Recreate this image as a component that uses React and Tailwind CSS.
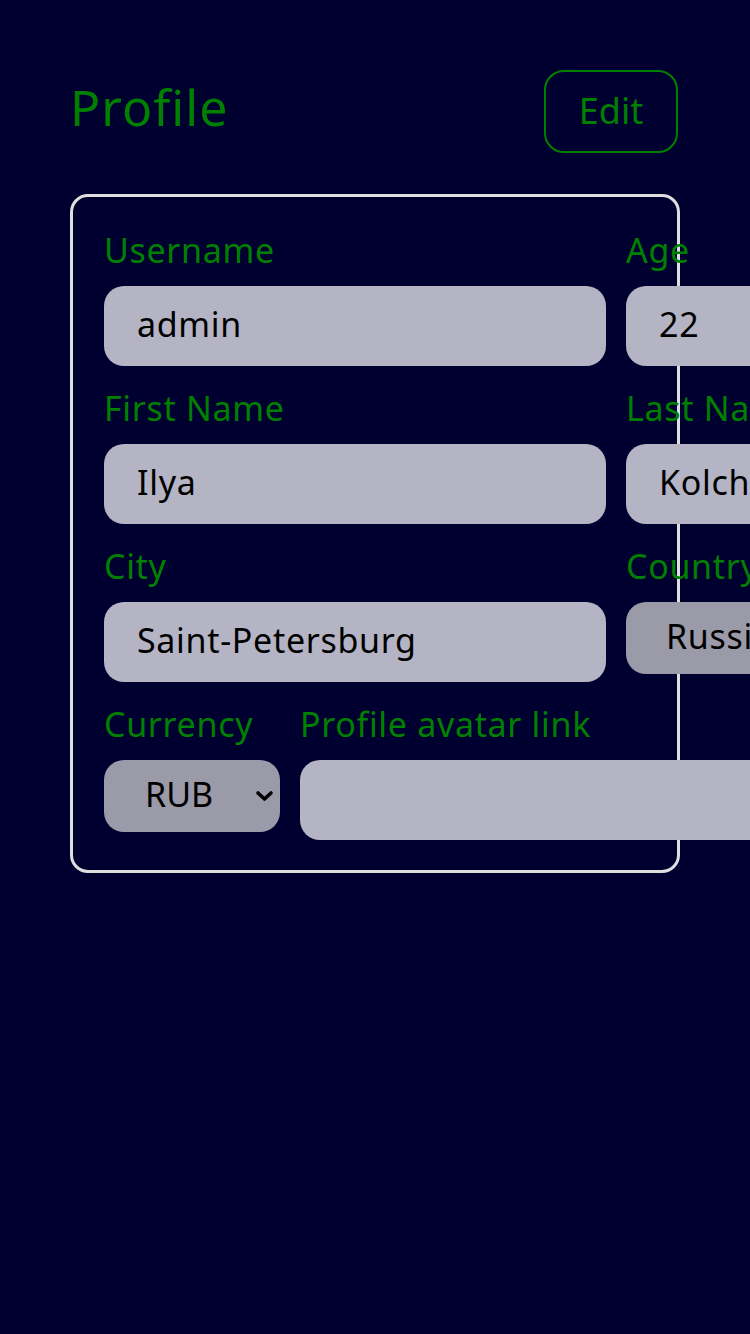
import React from "react";

const font = { fontFamily: '"Noto Sans", "Open Sans", sans-serif' };

function Label({ children }) {
  return (
    <label className="block h-8 leading-9 text-[34px] tracking-[0.02em] text-[#008000] whitespace-nowrap mb-[22px]">
      {children}
    </label>
  );
}

function Field({ label, value, width, select }) {
  return (
    <div className="flex flex-col shrink-0" style={{ width }}>
      <Label>{label}</Label>
      {select ? (
        <div className="h-[72px] rounded-[20px] bg-[#9b9aa9] flex items-center pl-10 pb-1 text-[34px] tracking-[0.02em] text-black overflow-hidden whitespace-nowrap">
          {value}
        </div>
      ) : (
        <div className="h-20 rounded-[20px] bg-[#b4b4c4] flex items-center pl-[33px] pb-1 text-[34px] tracking-[0.02em] text-black whitespace-nowrap overflow-hidden">
          {value}
        </div>
      )}
    </div>
  );
}

export default function App() {
  return (
    <div className="min-h-screen w-[750px] overflow-hidden bg-[#000030]" style={font}>
      <div className="pl-[70px] pt-[70px]">
        <div className="w-[608px] flex items-start justify-between">
          <h1 className="mt-[12px] text-[50px] leading-none tracking-[0.02em] text-[#008000]">Profile</h1>
          <button className="w-[134px] h-[83px] rounded-[20px] border-2 border-[#008000] text-[36px] text-[#008000] flex items-center justify-center pb-[2px]">
            Edit
          </button>
        </div>
        <div className="mt-[41px] w-[610px] border-[3px] border-[#dedede] rounded-[18px] pt-[35px] pb-[30px] px-[31px]">
          <div className="flex flex-col gap-6 w-[900px]">
            <div className="flex gap-5">
              <Field label="Username" value="admin" width={502} />
              <Field label="Age" value="22" width={300} />
            </div>
            <div className="flex gap-5">
              <Field label="First Name" value="Ilya" width={502} />
              <Field label="Last Name" value="Kolchin" width={300} />
            </div>
            <div className="flex gap-5 items-start">
              <Field label="City" value="Saint-Petersburg" width={502} />
              <Field label="Country" value="Russia" width={300} select />
            </div>
            <div className="flex gap-5 items-start">
              <div className="flex flex-col shrink-0 w-[176px]">
                <Label>Currency</Label>
                <div className="relative h-[72px] rounded-[20px] bg-[#9b9aa9] flex items-center pl-[41px] pb-1 text-[34px] text-black">
                  RUB
                  <svg className="absolute left-[151px] top-[30px]" width="19" height="12" viewBox="0 0 19 12">
                    <path d="M3 3 L9.5 9 L16 3" fill="none" stroke="#000" strokeWidth="3.6" strokeLinecap="round" strokeLinejoin="round" />
                  </svg>
                </div>
              </div>
              <Field label="Profile avatar link" value="" width={500} />
            </div>
          </div>
        </div>
      </div>
    </div>
  );
}
